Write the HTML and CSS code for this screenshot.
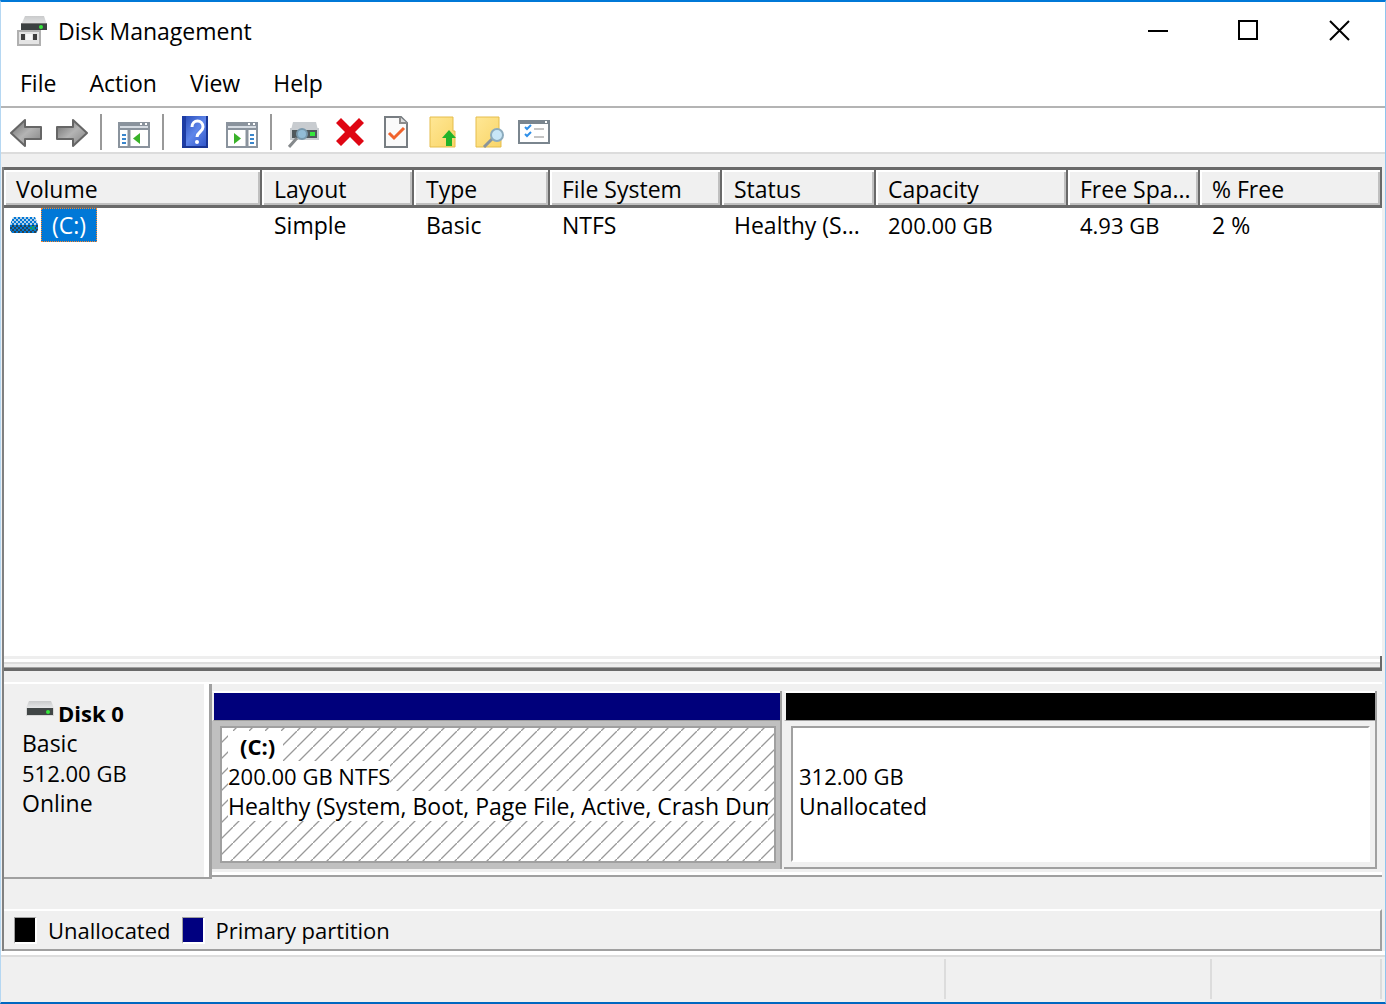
FILE: index.html
```html
<!DOCTYPE html>
<html lang="en">
<head>
<meta charset="utf-8">
<title>Disk Management</title>
<link rel="stylesheet" href="styles.css">
</head>
<body>
<svg class="defs" aria-hidden="true">
  <defs>
    <linearGradient id="steel" x1="0" y1="0" x2="1" y2="1"><stop offset="0" stop-color="#686868"/><stop offset=".5" stop-color="#b4b4b4"/><stop offset="1" stop-color="#808080"/></linearGradient>
    <linearGradient id="lid" x1="0" y1="0" x2="0" y2="1"><stop offset="0" stop-color="#c9cacb"/><stop offset="1" stop-color="#e6e7e8"/></linearGradient>
    <linearGradient id="blue" x1="0" y1="0" x2="1" y2="1"><stop offset="0" stop-color="#2346b4"/><stop offset=".5" stop-color="#5f86ea"/><stop offset="1" stop-color="#2a4fc4"/></linearGradient>
    <linearGradient id="paper" x1="0" y1="0" x2="1" y2="1"><stop offset="0" stop-color="#ffe795"/><stop offset="1" stop-color="#f9d568"/></linearGradient>
    <pattern id="dither" width="4" height="4" patternUnits="userSpaceOnUse"><path d="M0 0h2v2H0zM2 2h2v2H2z" fill="#0078d7"/></pattern>
  </defs>
</svg>
<div class="window">
  <header class="titlebar">
    <svg class="app-icon" viewBox="0 0 32 32" aria-hidden="true">
      <path d="M9 1h19l3 9H5z" fill="url(#lid)"/><path d="M5 8h26v7H5z" fill="#3c4142"/><path d="M5 8h26v1H5z" fill="#777"/><circle cx="25" cy="12" r="2" fill="#35e83c"/>
      <path d="M2 16h22v14H2z" fill="#e4e4e4" stroke="#b0b0b0" stroke-width="2"/><path d="M5 19h4v6H5zM17 19h4v6h-4z" fill="#3e3e3e"/><path d="M10 19h6v6h-6z" fill="#f8f8f8"/>
    </svg>
    <h1>Disk Management</h1>
    <div class="captions">
      <button aria-label="Minimize"><svg viewBox="0 0 22 22"><path d="M1 11h20" stroke="#000" stroke-width="2"/></svg></button>
      <button aria-label="Maximize"><svg viewBox="0 0 22 22"><path d="M1 1h18v18H1z" fill="none" stroke="#000" stroke-width="2"/></svg></button>
      <button aria-label="Close"><svg viewBox="0 0 22 22"><path d="M1 1l19 19M20 1L1 20" stroke="#000" stroke-width="2"/></svg></button>
    </div>
  </header>
  <nav class="menubar">
    <button>File</button><button>Action</button><button>View</button><button>Help</button>
  </nav>
  <div class="toolbar" role="toolbar" aria-label="Tools">
    <button aria-label="Back"><svg viewBox="0 0 32 32"><path d="M1 17L15 4v7h16v12H15v7z" fill="url(#steel)" stroke="#666" stroke-width="2" stroke-linejoin="round"/></svg></button>
    <button aria-label="Forward"><svg viewBox="0 0 32 32"><path d="M31 17L17 4v7H1v12h16v7z" fill="url(#steel)" stroke="#666" stroke-width="2" stroke-linejoin="round"/></svg></button>
    <span class="sep"></span>
    <button aria-label="Show console tree"><svg viewBox="0 0 32 32"><path d="M1 7h30v24H1z" fill="#fff" stroke="#8a939d" stroke-width="2"/><path d="M1 6h30v8H1z" fill="#8a939d"/><path d="M2 10h28v2H2z" fill="#d6dce3"/><path d="M22 7h2v2h-2zM27 7h2v2h-2z" fill="#fff"/><path d="M11 14v16" stroke="#8a939d" stroke-width="3"/><path d="M4 19h4M4 23h4M4 27h4" stroke="#3a86cc" stroke-width="2"/><path d="M22 17v11l-7-5.500z" fill="#39b229"/></svg></button>
    <span class="sep"></span>
    <button aria-label="Help topics"><svg viewBox="0 0 32 32"><path d="M2 0h26v32H2z" fill="url(#blue)"/><path d="M2 0h4v32H2z" fill="#1d3ca4"/><path d="M2 31h26M27 0v32" stroke="#1a3694" stroke-width="2"/><path d="M12 11c0-8 11-8 11 0 0 5-6 5-6 10" fill="none" stroke="#fff" stroke-width="3"/><circle cx="17" cy="26" r="2" fill="#fff"/></svg></button>
    <button aria-label="Show action pane"><svg viewBox="0 0 32 32"><path d="M1 7h30v24H1z" fill="#fff" stroke="#8a939d" stroke-width="2"/><path d="M1 6h30v8H1z" fill="#8a939d"/><path d="M2 10h28v2H2z" fill="#d6dce3"/><path d="M22 7h2v2h-2zM27 7h2v2h-2z" fill="#fff"/><path d="M21 14v16" stroke="#8a939d" stroke-width="3"/><path d="M24 19h4M24 23h4M24 27h4" stroke="#3a86cc" stroke-width="2"/><path d="M8 17v11l7-5.500z" fill="#39b229"/></svg></button>
    <span class="sep"></span>
    <button aria-label="Rescan disks"><svg viewBox="0 0 32 32"><path d="M5 6h23l2 8H3z" fill="#c8ccd0"/><path d="M3 14h27v8H3z" fill="#50585c"/><path d="M3 13h27v10H3z" fill="none" stroke="#c8ccd0" stroke-width="2"/><path d="M22 16h5v4h-5z" fill="#35e83c"/><path d="M9 22L1 31" stroke="#85898c" stroke-width="3"/><circle cx="14" cy="18" r="5" fill="#92bcd6" stroke="#7898ac" stroke-width="2"/></svg></button>
    <button aria-label="Delete"><svg viewBox="0 0 32 32"><path d="M2 7l5-5 9 9 9-9 5 5-9 9 9 9-5 5-9-9-9 9-5-5 9-9z" fill="#df0613"/></svg></button>
    <button aria-label="Properties"><svg viewBox="0 0 32 32"><path d="M5 1h16l6 6v24H5z" fill="#fafafa" stroke="#777d82" stroke-width="2"/><path d="M20 1v6h7" fill="#ddd" stroke="#8b8b8b" stroke-width="2"/><path d="M9 17l5 5L24 12" fill="none" stroke="#f0622b" stroke-width="3"/></svg></button>
    <button aria-label="Up one level"><svg viewBox="0 0 32 32"><path d="M4 1h23v14h2v16H4z" fill="url(#paper)" stroke="#e5bd4c" stroke-width="1"/><path d="M23 14l7 8h-4v8h-6v-8h-4z" fill="#22b32a"/></svg></button>
    <button aria-label="Find"><svg viewBox="0 0 32 32"><path d="M4 1h23v14h2v16H4z" fill="url(#paper)" stroke="#e5bd4c" stroke-width="1"/><path d="M20 23l-8 8" stroke="#8a949a" stroke-width="3"/><circle cx="25" cy="19" r="6" fill="#c8e6f7" stroke="#8cabbd" stroke-width="2"/></svg></button>
    <button aria-label="View settings"><svg viewBox="0 0 32 32"><path d="M1 5h30v22H1z" fill="#fff" stroke="#7a858e" stroke-width="2"/><path d="M1 4h30v4H1z" fill="#7a858e"/><path d="M27 5h2v2h-2z" fill="#fff"/><path d="M7 11l2 2 4-4M7 18l2 2 4-4" fill="none" stroke="#2f8fe8" stroke-width="2"/><path d="M16 13h10M16 21h10" stroke="#c4c4c4" stroke-width="2"/></svg></button>
  </div>

  <main class="client">
    <section class="volumes" aria-label="Volumes">
      <table>
        <colgroup><col class="c-volume"><col class="c-layout"><col class="c-type"><col class="c-fs"><col class="c-status"><col class="c-capacity"><col class="c-free"><col></colgroup>
        <thead><tr><th>Volume</th><th>Layout</th><th>Type</th><th>File System</th><th>Status</th><th>Capacity</th><th>Free Spa...</th><th>% Free</th></tr></thead>
        <tbody><tr>
          <td class="name"><div class="volume"><svg viewBox="0 0 28 16" aria-hidden="true"><path d="M3 0h22l3 8H0z" fill="#b5cfe5"/><path d="M0 8h28v5l-2 3H2l-2-3z" fill="#2b4350"/><path d="M20 9h5v4h-5z" fill="#16a34a"/><path d="M3 0h22l3 8v5l-2 3H2l-2-3V8z" fill="url(#dither)"/></svg><span class="selected">(C:)</span></div></td>
          <td>Simple</td><td>Basic</td><td>NTFS</td><td>Healthy (S...</td><td class="size">200.00 GB</td><td class="size">4.93 GB</td><td>2 %</td>
        </tr></tbody>
      </table>
    </section>
    <div class="splitter"></div>
    <section class="disk" aria-label="Disk 0">
      <div class="disk-info">
        <h2><svg viewBox="0 0 28 16" aria-hidden="true"><path d="M3 0h22l3 7H0z" fill="url(#lid)"/><path d="M0 7h28v8H0z" fill="#d8d8d8"/><path d="M1 7h26v7H1z" fill="#414646"/><circle cx="22" cy="11" r="2" fill="#35e83c"/></svg>Disk 0</h2>
        <p>Basic</p><p class="size">512.00 GB</p><p>Online</p>
      </div>
      <div class="partitions">
        <article class="partition primary">
          <div class="bar"></div>
          <div class="frame"><div class="body"><p><strong>(C:)</strong></p><p class="size"><span>200.00 GB NTFS</span></p><p><span>Healthy (System, Boot, Page File, Active, Crash Dump)</span></p></div></div>
        </article>
        <article class="partition unallocated">
          <div class="bar"></div>
          <div class="frame"><div class="body"><p class="size">312.00 GB</p><p>Unallocated</p></div></div>
        </article>
      </div>
    </section>
    <div class="legend"><span class="swatch black"></span><span>Unallocated</span><span class="swatch navy"></span><span>Primary partition</span></div>
  </main>
  <footer class="statusbar"><span></span><span></span><span></span></footer>
</div>
</body>
</html>
```
FILE: styles.css
```css
* { box-sizing: border-box; }
body { margin: 0; font-family: "Open Sans", "Noto Sans", sans-serif; font-size: 23px; line-height: 30px; color: #000; background: #f0f0f0; }
h1, h2, p { margin: 0; font-size: inherit; font-weight: 400; }
button { padding: 0; border: 0; background: none; font: inherit; color: inherit; }
svg { display: block; flex: none; }
.defs { position: absolute; width: 0; height: 0; }

.window { display: flex; flex-direction: column; min-height: 100vh; border: solid; border-width: 2px 1px; border-color: #0078d7 #8ec5ee #0067c0 #b5d7f2; }

.titlebar { display: flex; align-items: center; height: 58px; padding-left: 15px; background: #fff; }
.app-icon { width: 32px; height: 32px; }
h1 { flex: 1; margin-left: 10px; }
.captions { display: flex; }
.captions button { display: grid; place-items: center; width: 91px; height: 58px; }
.captions svg { width: 22px; height: 22px; }

.menubar { display: flex; gap: 33px; height: 48px; padding: 8px 0 8px 19px; background: #fff; border-bottom: 2px solid #b4b4b4; }
.toolbar { display: flex; align-items: center; height: 46px; padding-left: 2px; background: #fff; border-bottom: 2px solid #dcdcdc; }
.toolbar button { display: grid; place-items: center; width: 46px; height: 44px; padding-top: 4px; }
.toolbar svg { width: 32px; height: 32px; }
.sep { width: 2px; height: 36px; margin: 4px 9px 0 5px; background: #999; }

.client { flex: 1; display: flex; flex-direction: column; margin: 13px 3px 0 1px; border-left: 2px solid #808080; }
.volumes { flex: 1; background: #fff; border-top: 3px solid #696969; overflow: hidden; }
table { width: 100%; table-layout: fixed; border-collapse: separate; border-spacing: 0; }
.c-volume { width: 258px; }
.c-layout { width: 152px; }
.c-type { width: 136px; }
.c-fs { width: 172px; }
.c-status { width: 154px; }
.c-capacity { width: 192px; }
.c-free { width: 132px; }
th, td { padding: 0 0 0 12px; font-weight: 400; text-align: left; white-space: nowrap; }
th { height: 38px; padding-top: 3px; background: #f0f0f0; border-right: 2px solid #696969; border-bottom: 3px solid #696969; box-shadow: inset 2px 2px #fff, inset -2px -2px #c0c0c0; }
td { height: 34px; }
td.name { padding-left: 6px; }
.size { font-size: 22px; }
.volume { display: flex; align-items: center; gap: 3px; }
.volume svg { width: 28px; height: 16px; }
.selected { height: 34px; padding: 1px 10px; color: #fff; background: #0078d7; border: 1px dotted #ff8728; }
.splitter { height: 15px; background: linear-gradient(#eee 3px, #fff 3px 6px, #ddd 6px 8px, #eee 8px 11px, #a0a0a0 11px 12px, #696969 12px); border-right: 2px solid #696969; }

.disk { display: flex; height: 197px; margin-top: 11px; border-top: 2px solid #fff; }
.disk-info { width: 208px; padding: 14px 0 0 18px; border-right: 3px solid #a0a0a0; border-bottom: 2px solid #a0a0a0; box-shadow: inset -5px 0 #fff; }
h2 { display: flex; align-items: center; gap: 4px; padding-left: 4px; font-size: 22px; font-weight: 700; }
h2 svg { width: 28px; height: 16px; margin-bottom: 8px; }
.partitions { flex: 1; display: flex; gap: 2px; margin-bottom: 2px; padding: 7px 5px 6px 0; border-bottom: 2px solid #a0a0a0; box-shadow: inset 0 -3px #fff; }
.partition { display: flex; flex-direction: column; min-width: 0; border-right: 2px solid #a0a0a0; }
.primary { flex: 569; }
.unallocated { flex: 592; }
.bar { height: 30px; border: solid; border-width: 2px 0 1px 2px; border-color: #fff #fff #a0a0a0 #f0f0f0; }
.primary .bar { background: #00007b; }
.unallocated .bar { background: #000; }
.frame { flex: 1; display: flex; min-width: 0; }
.body { flex: 1; min-width: 0; padding: 3px 6px; border: 2px solid #a0a0a0; white-space: nowrap; overflow: hidden; }
.body p { height: 30px; overflow: hidden; }
.primary .frame { padding: 5px 4px 6px 8px; background: #c0c0c0; }
.primary .body { background: linear-gradient(135deg, transparent 46%, #999 48% 52%, transparent 54%) 11px 3px / 16px 16px #fff; }
.primary strong, .primary span { display: inline-block; max-width: 100%; background: #fff; overflow: hidden; vertical-align: top; }
.primary strong { padding: 0 8px 0 12px; font-size: 22px; }
.unallocated .frame { padding: 5px 5px 5px 7px; border-bottom: 2px solid #a0a0a0; }
.unallocated .body { padding-top: 33px; background: #fff; border-color: #a0a0a0 #fff #fff #a0a0a0; }

.legend { display: flex; align-items: center; gap: 11px; height: 42px; margin-top: 30px; padding-left: 10px; font-size: 22px; border: solid; border-width: 2px 2px 2px 0; border-color: #fff #a0a0a0 #a0a0a0; }
.swatch { width: 23px; height: 27px; border: 1px solid; border-width: 1px 2px 2px 1px; border-color: #a0a0a0 #fff #fff #a0a0a0; }
.black { background: #000; }
.navy { background: #000080; }
.statusbar { display: grid; grid-template-columns: 1fr 266px 170px; height: 51px; padding: 4px 3px 3px 0; border-top: 4px solid #fff; box-shadow: inset 0 2px #dcdcdc; }
.statusbar span { border-right: 2px solid #dcdcdc; }
```
